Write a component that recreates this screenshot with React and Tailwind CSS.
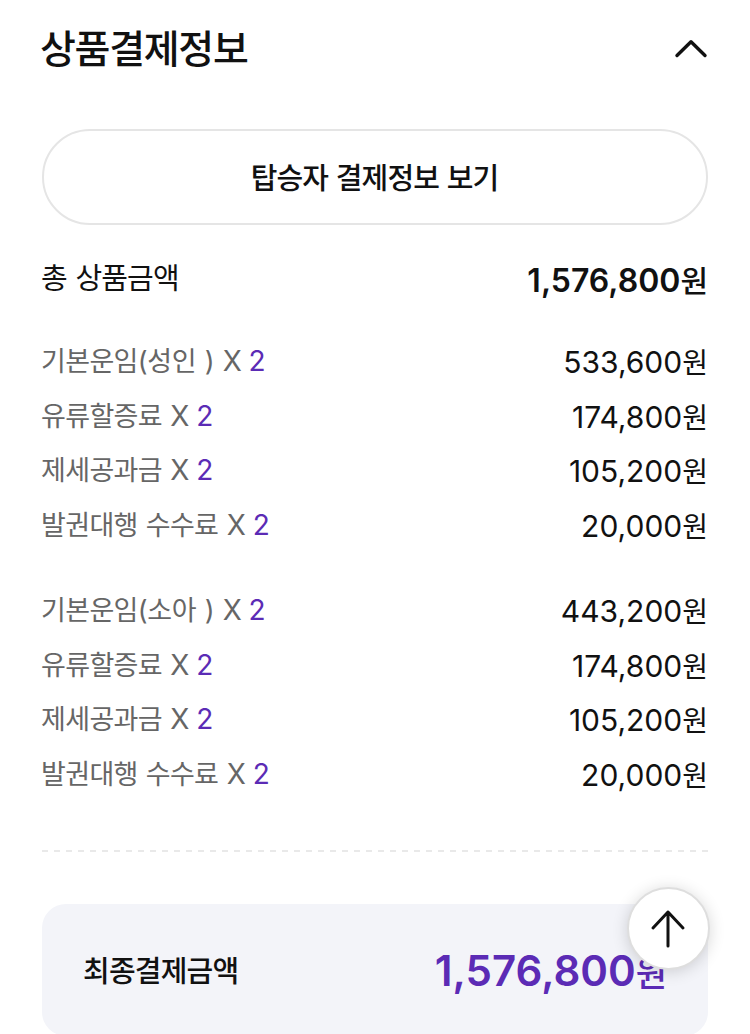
import { useState } from "react";

const FARE_GROUPS = [
  {
    id: "adult",
    items: [
      { label: "기본운임", ageType: "(성인 )", count: 2, amount: 533600 },
      { label: "유류할증료", count: 2, amount: 174800 },
      { label: "제세공과금", count: 2, amount: 105200 },
      { label: "발권대행 수수료", count: 2, amount: 20000 },
    ],
  },
  {
    id: "child",
    items: [
      { label: "기본운임", ageType: "(소아 )", count: 2, amount: 443200 },
      { label: "유류할증료", count: 2, amount: 174800 },
      { label: "제세공과금", count: 2, amount: 105200 },
      { label: "발권대행 수수료", count: 2, amount: 20000 },
    ],
  },
];

const TOTAL = 1576800;

const formatAmount = (value) => value.toLocaleString("en-US");

function FareRow({ item }) {
  return (
    <li className="flex h-[54.5px] items-center justify-between">
      <span className="-ml-px pb-0.5 text-[28px] whitespace-pre text-[#666]">
        <span className="text-[27px] tracking-[-0.65px] [word-spacing:1px]">
          {item.label}
          {item.ageType && (
            <span className="tracking-[-0.3px]">{item.ageType}</span>
          )}
        </span>
        <span className="[word-spacing:0.5px]">{" X"}</span>
        <span className="text-[#5b2bb5] [word-spacing:-1px]">
          {" "}
          {item.count}
        </span>
      </span>
      <span className="text-[30px] whitespace-nowrap">
        {formatAmount(item.amount)}
        <span className="text-[28px]">원</span>
      </span>
    </li>
  );
}

function App() {
  const [open, setOpen] = useState(true);

  return (
    <div className="relative h-[1034px] w-[750px] overflow-hidden bg-white px-[42px] font-['Inter','Noto_Sans_CJK_KR',sans-serif] leading-none text-[#111]">
      <header className="flex h-[98px] items-center justify-between">
        <h2 className="-ml-0.5 pb-0.5 text-[39px] font-medium tracking-[-1.3px]">
          상품결제정보
        </h2>
        <button onClick={() => setOpen(!open)} aria-label="접기">
          <svg
            className="block h-9 w-[34px]"
            viewBox="0 0 34 36"
            fill="none"
            stroke="currentColor"
            strokeWidth="3.4"
            strokeLinecap="round"
            strokeLinejoin="round"
          >
            <path d="M3 24.5 17 10.8l14 13.7" />
          </svg>
        </button>
      </header>

      {open && (
        <>
          <button className="mt-[31px] flex h-24 w-full items-center justify-center rounded-full border-2 border-[#e5e5e5] pt-0.5 pr-px text-[29px] font-medium tracking-[-0.9px] [word-spacing:1px]">
            탑승자 결제정보 보기
          </button>

          <div className="mt-[27px] flex h-[58px] items-center justify-between">
            <span className="-ml-px pb-1.5 text-[29px] tracking-[-0.9px] [word-spacing:1.5px]">
              총 상품금액
            </span>
            <span className="text-[32px] font-semibold whitespace-nowrap">
              {formatAmount(TOTAL)}
              <span className="text-[30px] font-medium">원</span>
            </span>
          </div>

          <div className="mt-[25px] flex flex-col gap-[31px]">
            {FARE_GROUPS.map((group) => (
              <ul key={group.id}>
                {group.items.map((item) => (
                  <FareRow key={item.label} item={item} />
                ))}
              </ul>
            ))}
          </div>

          <svg className="mt-[48px] block h-0.5 w-full" aria-hidden="true">
            <line
              x1="0"
              y1="1"
              x2="666"
              y2="1"
              stroke="#e9e9e9"
              strokeWidth="2"
              strokeDasharray="6 6"
            />
          </svg>

          <div className="mt-[52px] flex h-[132px] items-center justify-between rounded-3xl bg-[#f3f4f9] px-[42px]">
            <span className="-ml-px pt-0.5 text-[29px] font-medium tracking-[-0.8px]">
              최종결제금액
            </span>
            <span className="-mr-px pt-px text-[42px] font-semibold whitespace-nowrap text-[#5b2bb5]">
              {formatAmount(TOTAL)}
              <span className="text-[34px] font-medium">원</span>
            </span>
          </div>
        </>
      )}

      {/* Scroll to top */}
      <button
        aria-label="맨 위로"
        className="absolute top-[887px] left-[627px] flex h-[83px] w-[83px] items-center justify-center rounded-full border-2 border-[#dedede] bg-white shadow-[0_2px_16px_rgba(0,0,0,0.16)]"
      >
        <svg
          className="h-10 w-10"
          viewBox="0 0 40 40"
          fill="none"
          stroke="currentColor"
          strokeWidth="3"
          strokeLinecap="round"
          strokeLinejoin="round"
        >
          <path d="M19 37V3M4 19l15-16 15 16" />
        </svg>
      </button>
    </div>
  );
}

export default App;
